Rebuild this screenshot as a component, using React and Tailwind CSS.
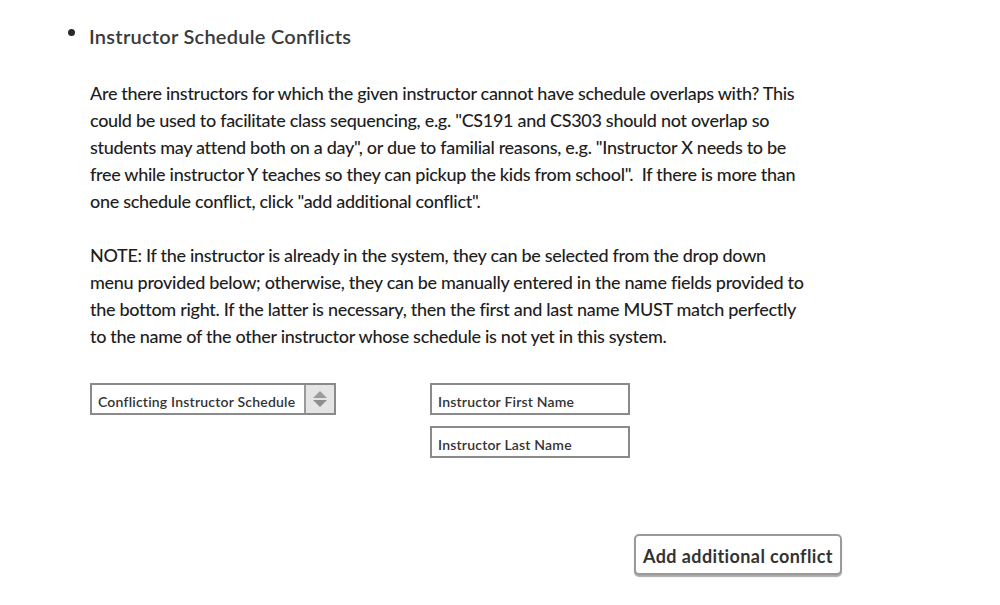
export default function App() {
  const font = { fontFamily: '"Lato", "Noto Sans", sans-serif' };
  return (
    <div className="w-[1000px] h-[605px] bg-white text-[#222]" style={font}>
      <div className="pl-[89px] pt-[22px]">
        <div className="flex items-center relative">
          <span className="absolute left-[-21px] top-[7px] w-[7px] h-[7px] rounded-full bg-[#2a2a2a]" />
          <span className="text-[20px] tracking-[0.25px] font-semibold text-[#3a3a3a] leading-[28px]">
            Instructor Schedule Conflicts
          </span>
        </div>
        <div className="pt-[30px] pl-[1px] w-[720px] text-[18px] leading-[27px] tracking-[-0.3px] font-medium text-[#1e1e1e]">
          <p>
            Are there instructors for which the given instructor cannot have schedule overlaps with? This could be used to facilitate class sequencing, e.g. "CS191 and CS303 should not overlap so students may attend both on a day", or due to familial reasons, e.g. "Instructor X needs to be free while instructor Y teaches so they can pickup the kids from school".&nbsp; If there is more than one schedule conflict, click "add additional conflict".
          </p>
          <p className="mt-[27px]">
            NOTE: If the instructor is already in the system, they can be selected from the drop down menu provided below; otherwise, they can be manually entered in the name fields provided to the bottom right. If the latter is necessary, then the first and last name MUST match perfectly to the name of the other instructor whose schedule is not yet in this system.
          </p>
        </div>
        <div className="flex mt-[33px] pl-[1px]">
          <div className="flex w-[246px] h-[32px] border-2 border-[#8a8a8a] bg-white">
            <div className="flex-1 flex items-center pl-[6px] pt-[4px] text-[14px] tracking-[0.2px] font-semibold text-[#333]">
              Conflicting Instructor Schedule
            </div>
            <div className="w-[30px] bg-[#e4e4e4] border-l-2 border-[#9a9a9a] flex items-center justify-center">
              <svg width="16" height="20" viewBox="0 0 16 20">
                <polygon points="8,2 15,9 1,9" fill="#9a9a9a" />
                <polygon points="1,11 15,11 8,18" fill="#8e8e8e" />
              </svg>
            </div>
          </div>
          <div className="ml-[94px] flex flex-col gap-[11px]">
            <div className="w-[200px] h-[32px] border-2 border-[#8a8a8a] flex items-center pl-[6px] pt-[4px] text-[14px] tracking-[0.2px] font-semibold text-[#333]">
              Instructor First Name
            </div>
            <div className="w-[200px] h-[32px] border-2 border-[#8a8a8a] flex items-center pl-[6px] pt-[4px] text-[14px] tracking-[0.2px] font-semibold text-[#333]">
              Instructor Last Name
            </div>
          </div>
        </div>
        <div className="flex mt-[76px] pl-[545px]">
          <button className="w-[208px] h-[41px] rounded-[5px] border-2 border-[#9a9a9a] bg-white shadow-[0_2px_1px_#aaa] text-[18px] tracking-[0.4px] font-bold text-[#333] pt-[4px]">
            Add additional conflict
          </button>
        </div>
      </div>
    </div>
  );
}
